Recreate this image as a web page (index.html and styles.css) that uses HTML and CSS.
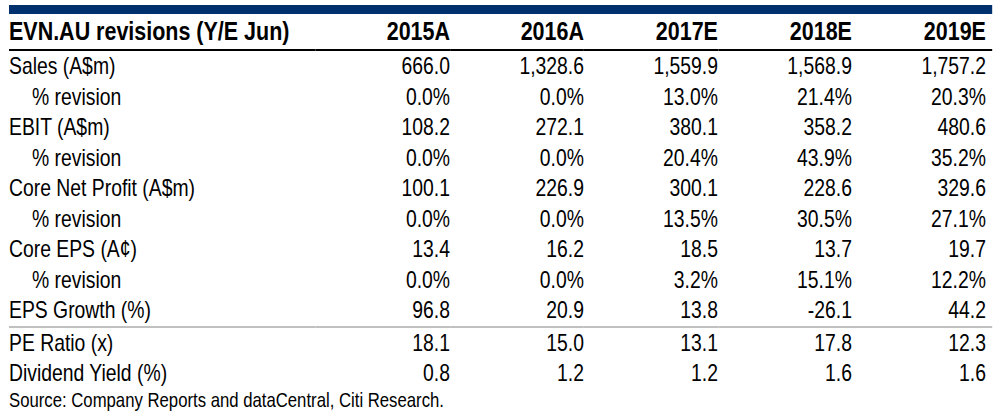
FILE: index.html
```html
<!DOCTYPE html>
<html>
<head>
<meta charset="utf-8">
<link rel="stylesheet" href="styles.css">
</head>
<body>
<div class="wrap">
  <div class="sheet">
    <div class="bar"></div>
    <table class="fin">
      <colgroup>
        <col class="c-label"><col class="c-num"><col class="c-num"><col class="c-num"><col class="c-num"><col class="c-last">
      </colgroup>
      <thead>
        <tr><th class="lbl">EVN.AU revisions (Y/E Jun)</th><th>2015A</th><th>2016A</th><th>2017E</th><th>2018E</th><th>2019E</th></tr>
      </thead>
      <tbody>
        <tr><td class="lbl">Sales (A$m)</td><td>666.0</td><td>1,328.6</td><td>1,559.9</td><td>1,568.9</td><td>1,757.2</td></tr>
        <tr><td class="lbl sub">% revision</td><td>0.0%</td><td>0.0%</td><td>13.0%</td><td>21.4%</td><td>20.3%</td></tr>
        <tr><td class="lbl">EBIT (A$m)</td><td>108.2</td><td>272.1</td><td>380.1</td><td>358.2</td><td>480.6</td></tr>
        <tr><td class="lbl sub">% revision</td><td>0.0%</td><td>0.0%</td><td>20.4%</td><td>43.9%</td><td>35.2%</td></tr>
        <tr><td class="lbl">Core Net Profit (A$m)</td><td>100.1</td><td>226.9</td><td>300.1</td><td>228.6</td><td>329.6</td></tr>
        <tr><td class="lbl sub">% revision</td><td>0.0%</td><td>0.0%</td><td>13.5%</td><td>30.5%</td><td>27.1%</td></tr>
        <tr><td class="lbl">Core EPS (A¢)</td><td>13.4</td><td>16.2</td><td>18.5</td><td>13.7</td><td>19.7</td></tr>
        <tr><td class="lbl sub">% revision</td><td>0.0%</td><td>0.0%</td><td>3.2%</td><td>15.1%</td><td>12.2%</td></tr>
        <tr class="sep"><td class="lbl">EPS Growth (%)</td><td>96.8</td><td>20.9</td><td>13.8</td><td>-26.1</td><td>44.2</td></tr>
        <tr><td class="lbl">PE Ratio (x)</td><td>18.1</td><td>15.0</td><td>13.1</td><td>17.8</td><td>12.3</td></tr>
        <tr><td class="lbl">Dividend Yield (%)</td><td>0.8</td><td>1.2</td><td>1.2</td><td>1.6</td><td>1.6</td></tr>
      </tbody>
    </table>
    <p class="source">Source: Company Reports and dataCentral, Citi Research.</p>
  </div>
</div>
</body>
</html>
```
FILE: styles.css
```css
html, body {
  margin: 0;
  padding: 0;
  background: #ffffff;
  overflow: hidden;
}

body {
  font-family: "Liberation Sans Narrow", "Arial Narrow", "Liberation Sans", Arial, sans-serif;
  color: #000000;
}

.wrap {
  width: 983px;
  padding: 5px 0 0 9px;
}

/* Condensed rendering: no narrow face is installed, so the sheet is
   laid out wide and compressed horizontally to Arial Narrow proportions. */
.sheet {
  width: 1198.8px;
  transform: scaleX(0.82);
  transform-origin: 0 0;
}

.bar {
  height: 9px;
  background: #00306e;
}

.fin {
  width: 1198.8px;
  border-collapse: collapse;
  table-layout: fixed;
}

.c-label { width: 374.4px; }
.c-num { width: 163.4px; }
.c-last { width: 170.8px; }

.fin th,
.fin td {
  padding: 0;
  text-align: right;
  white-space: nowrap;
}

.fin th:last-child,
.fin td:last-child {
  padding-right: 7.4px;
}

.fin th {
  font-size: 26.2px;
  font-weight: bold;
  height: 35px;
  line-height: 35px;
  border-bottom: 2px solid #000000;
}

.fin td {
  font-size: 23.6px;
  height: 30.5px;
  line-height: 30.5px;
}

.fin .lbl {
  text-align: left;
}

.fin .sub {
  padding-left: 28px;
}

.fin tr.sep td {
  border-bottom: 2px solid #c0c0c0;
}

.source {
  margin: 0;
  font-size: 20.4px;
  line-height: 22px;
}
```
